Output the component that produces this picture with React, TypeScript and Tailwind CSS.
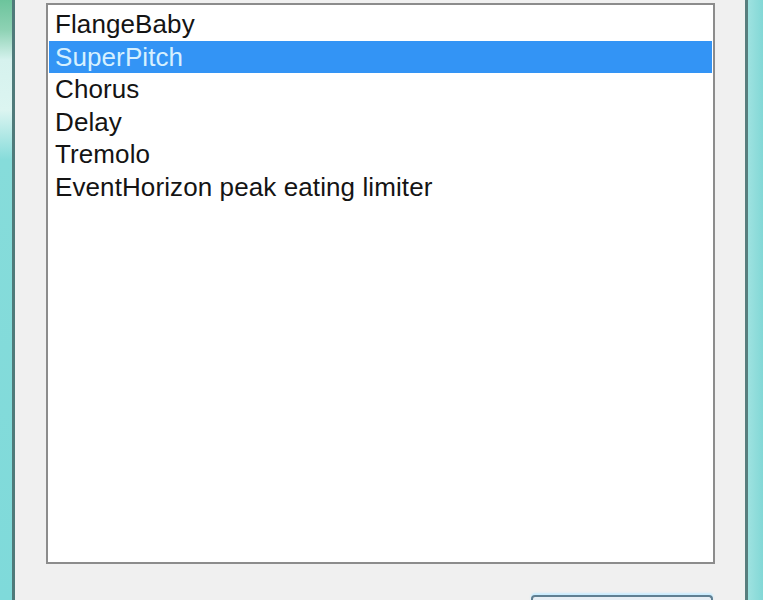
const items = [
  "FlangeBaby",
  "SuperPitch",
  "Chorus",
  "Delay",
  "Tremolo",
  "EventHorizon peak eating limiter",
];

export default function App() {
  const selected = 1;

  return (
    <div className="flex h-[600px] w-[763px] overflow-hidden bg-[#f0f0f0] font-['Liberation_Sans',Arial,sans-serif]">
      {/* Left window edge */}
      <div className="w-[12px] shrink-0 bg-[linear-gradient(to_bottom,#6cc49c_0px,#8ed2b4_30px,#d6f2ee_60px,#dcf5f1_110px,#86dcda_160px,#7fdada_600px)]" />
      <div className="w-[3px] shrink-0 bg-[#4f7a7a]" />

      {/* Dialog body */}
      <div className="flex flex-1 flex-col pl-[31px] pr-[30px] pt-[3px]">
        <div className="h-[561px] shrink-0 border-2 border-[#8c8c8c] bg-white p-[1px] pt-[3px]">
          {items.map((item, i) => (
            <div
              key={item}
              className={`h-[32.5px] pl-[6px] text-[26px] leading-[32px] tracking-[0.1px] ${
                i === selected ? "bg-[#3394f5] text-[#d6f0ff]" : "text-[#141414]"
              }`}
            >
              {item}
            </div>
          ))}
        </div>
        <div className="mt-[31px] flex shrink-0 justify-end pr-[2px]">
          <div className="h-[20px] w-[182px] shrink-0 rounded-t-[4px] border-2 border-b-0 border-[#5f7f92] bg-[#e6eef4] shadow-[0_-2px_2px_#c8ecff]" />
        </div>
      </div>

      {/* Right window edge */}
      <div className="w-[3px] shrink-0 bg-[#587e7e]" />
      <div className="w-[15px] shrink-0 bg-[linear-gradient(to_right,#9ee2e0,#82d8d6)]" />
    </div>
  );
}
